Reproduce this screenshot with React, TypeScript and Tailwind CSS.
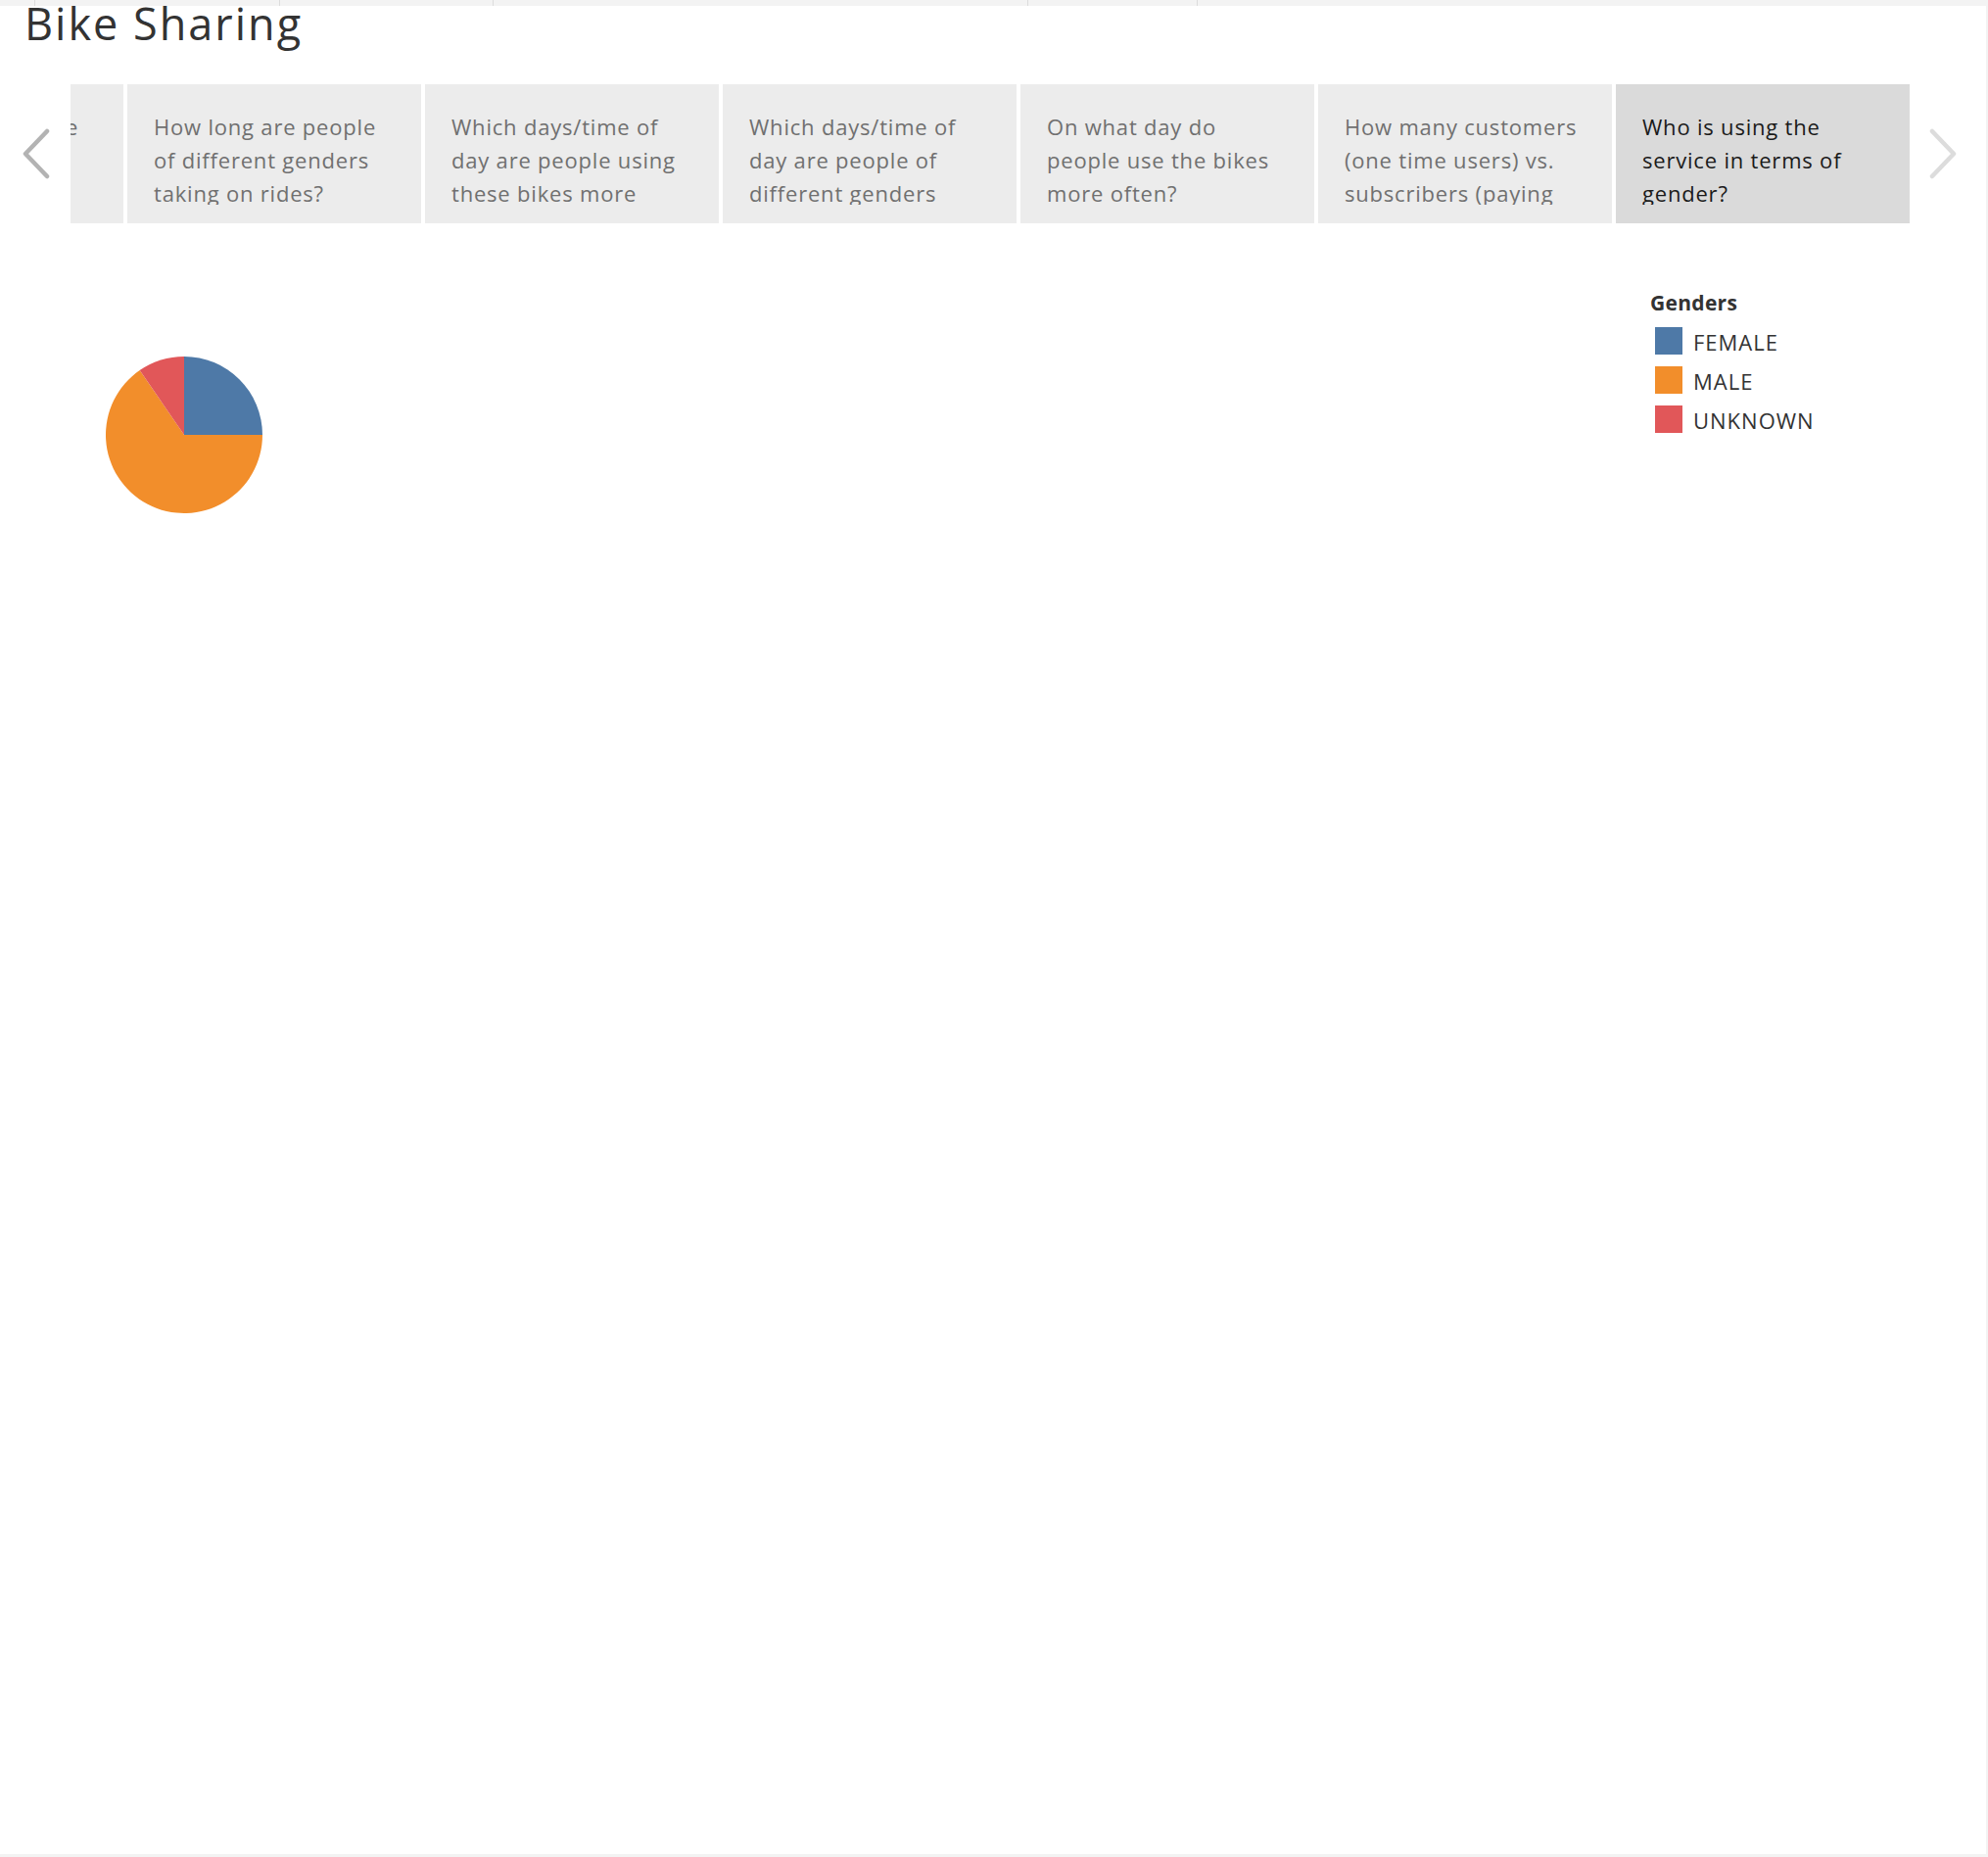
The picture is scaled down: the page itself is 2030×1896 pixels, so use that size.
import React from "react";

const TABS = [
  "How long are people of different genders taking on rides?",
  "Which days/time of day are people using these bikes more",
  "Which days/time of day are people of different genders",
  "On what day do people use the bikes more often?",
  "How many customers (one time users) vs. subscribers (paying",
  "Who is using the service in terms of gender?",
];

const LEGEND = [
  { label: "FEMALE", color: "bg-[#4e79a7]" },
  { label: "MALE", color: "bg-[#f28e2b]" },
  { label: "UNKNOWN", color: "bg-[#e15759]" },
];

// pie slices, angles in degrees clockwise from 12 o'clock
function slicePath(cx: number, cy: number, r: number, a0: number, a1: number) {
  const p = (a: number) => {
    const rad = ((a - 90) * Math.PI) / 180;
    return `${cx + r * Math.cos(rad)} ${cy + r * Math.sin(rad)}`;
  };
  const large = a1 - a0 > 180 ? 1 : 0;
  return `M ${cx} ${cy} L ${p(a0)} A ${r} ${r} 0 ${large} 1 ${p(a1)} Z`;
}

function Chevron({ dir, className }: { dir: "left" | "right"; className: string }) {
  return (
    <svg width="32" height="52" viewBox="0 0 32 52" className={className}>
      <path
        d={dir === "left" ? "M27 3 L5 26 L27 49" : "M5 3 L27 26 L5 49"}
        fill="none"
        stroke="currentColor"
        strokeWidth="4.5"
        strokeLinecap="round"
        strokeLinejoin="round"
      />
    </svg>
  );
}

export default function App() {
  return (
    <div className="w-[2030px] h-[1896px] bg-[#f3f3f3] flex flex-col font-['Open_Sans',sans-serif]">
      {/* top strip */}
      <div className="h-[6px] shrink-0 flex">
        <div className="w-[36px] border-r border-[#dcdcdc]" />
        <div className="w-[250px] border-r border-[#dcdcdc]" />
        <div className="w-[218px] border-r border-[#dcdcdc]" />
        <div className="w-[546px] border-r border-[#dcdcdc]" />
        <div className="w-[173px] border-r border-[#dcdcdc]" />
      </div>

      <div className="flex-1 bg-white mr-[2px] mb-[3px] flex flex-col">
        <h1 className="pt-[3px] px-[25px] text-[45px] leading-[30px] text-[#333333] font-normal tracking-[2px]">
          Bike Sharing
        </h1>

        {/* story points */}
        <div className="mt-[47px] h-[142px] flex">
          <div className="w-[72px] flex items-center justify-center text-[#b3b3b3]">
            <Chevron dir="left" className="ml-[2px]" />
          </div>
          <div className="flex gap-[4px]">
            <div className="w-[54px] h-full bg-[#ececec] overflow-hidden">
              <div className="-ml-[5px] pt-[26px] text-[22px] leading-[34px] text-[#6e6e6e]">e</div>
            </div>
            {TABS.map((t, i) => {
              const active = i === TABS.length - 1;
              return (
                <div
                  key={t}
                  className={
                    active
                      ? "w-[300px] h-full bg-[#dadada] pl-[27px] pr-[29px] pt-[26px]"
                      : "w-[300px] h-full bg-[#ececec] pl-[27px] pr-[29px] pt-[26px]"
                  }
                >
                  <div
                    className={
                      active
                        ? "h-[97px] overflow-hidden text-[22px] leading-[34px] tracking-[0.8px] text-[#1a1a1a]"
                        : "h-[97px] overflow-hidden text-[22px] leading-[34px] tracking-[0.8px] text-[#707070]"
                    }
                  >
                    {t}
                  </div>
                </div>
              );
            })}
          </div>
          <div className="flex-1 flex items-center justify-center text-[#dcdcdc]">
            <Chevron dir="right" className="mr-[10px]" />
          </div>
        </div>

        {/* viz */}
        <div className="flex">
          <div className="w-[1685px] pl-[108px] pt-[136px]">
            <svg width="160" height="160" viewBox="0 0 160 160">
              <path d={slicePath(80, 80, 80, 0, 90)} fill="#4e79a7" />
              <path d={slicePath(80, 80, 80, 90, 325.5)} fill="#f28e2b" />
              <path d={slicePath(80, 80, 80, 325.5, 360)} fill="#e15759" />
            </svg>
          </div>
          <div className="pt-[69px]">
            <div className="text-[21px] font-bold leading-[24px] tracking-[0.3px] text-[#333333]">Genders</div>
            <div className="mt-[13px] flex flex-col gap-[12px] pl-[5px]">
              {LEGEND.map((l) => (
                <div key={l.label} className="flex items-center gap-[11px] h-[28px]">
                  <div className={`w-[28px] h-[28px] ${l.color}`} />
                  <span className="pt-[2px] text-[22px] leading-[28px] tracking-[1px] text-[#333333]">
                    {l.label}
                  </span>
                </div>
              ))}
            </div>
          </div>
        </div>
      </div>
    </div>
  );
}
